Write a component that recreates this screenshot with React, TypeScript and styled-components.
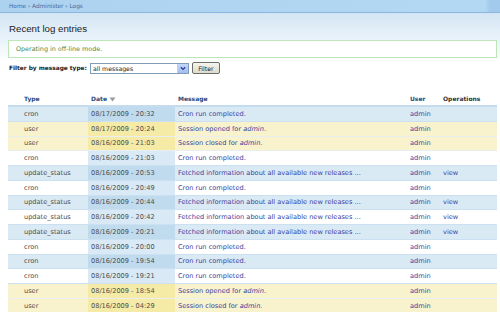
import React from 'react'
import styled, { createGlobalStyle } from 'styled-components'

const GlobalStyle = createGlobalStyle`
  html, body {
    margin: 0;
    padding: 0;
    background: #fff;
  }
  body {
    font-family: "DejaVu Sans", Verdana, sans-serif;
    color: #494949;
  }
`

const Page = styled.div`
  width: 500px;
  height: 312px;
  overflow: hidden;
  background: linear-gradient(#d4e5f3 13px, #eaf3fb 40px, #ffffff 62px);
`

const Breadcrumb = styled.div`
  height: 12px;
  line-height: 12px;
  padding-left: 9px;
  font-size: 5.8px;
  color: #46679a;
  background: linear-gradient(90deg, #acd2f0 0%, #b3d8f3 97%, #a2caec 98%);
  border-bottom: 1px solid #88b7e2;
`

const Content = styled.div`
  padding: 10px 3px 0 8px;
`

const Title = styled.h2`
  margin: 0 0 5px 1px;
  font-family: "Liberation Sans", Arial, sans-serif;
  font-weight: normal;
  font-size: 9.7px;
  line-height: 12px;
  color: #1d1d1d;
`

const Status = styled.div`
  height: 16px;
  line-height: 16px;
  padding-left: 7px;
  background: #fff;
  border: 1px solid #bce6b6;
  font-size: 6.4px;
  color: #4b8c4b;
`

const FilterForm = styled.form`
  display: flex;
  align-items: center;
  gap: 3px;
  margin: 4px 0 0 1px;
  height: 12px;
`

const Label = styled.label`
  font-weight: bold;
  font-size: 5.85px;
  color: #222;
`

const SelectBox = styled.div`
  display: flex;
  align-items: center;
  justify-content: space-between;
  width: 95px;
  height: 9px;
  border: 1px solid #7f9db9;
  background: #fff;
  padding-left: 2px;
  font-size: 6.2px;
  color: #222;
`

const SelectButton = styled.span`
  display: flex;
  align-items: center;
  justify-content: center;
  width: 10px;
  height: 9px;
  background: linear-gradient(#c4d8fb, #a3bdf3);
  border-left: 1px solid #b9cdf6;
`

const Button = styled.button`
  height: 12px;
  width: 28px;
  padding: 0;
  border: 1px solid #6e6e6e;
  border-radius: 2px;
  background: linear-gradient(#f6f5ef, #dedbcb);
  font-family: "DejaVu Sans", Verdana, sans-serif;
  font-size: 6.2px;
  color: #222;
`

const Table = styled.table`
  width: 100%;
  margin-top: 18px;
  border-collapse: collapse;
  table-layout: fixed;
`

const Th = styled.th<{ $plain?: boolean }>`
  height: 13px;
  padding: 0 3px;
  text-align: left;
  font-size: 6px;
  font-weight: bold;
  color: ${p => (p.$plain ? '#333' : '#27497c')};
  border-bottom: 2px solid #c4dcee;
  white-space: nowrap;
`

type Kind = 'odd' | 'even' | 'user'

const Row = styled.tr<{ $kind: Kind }>`
  background: ${p => (p.$kind === 'user' ? '#f9f3cd' : p.$kind === 'odd' ? '#daeaf5' : '#ffffff')};
  border-bottom: 1px solid ${p => (p.$kind === 'user' ? '#e9eef0' : '#cbe1f1')};
`

const Td = styled.td<{ $active?: boolean; $kind?: Kind; $link?: boolean }>`
  height: 13.75px;
  padding: 0 3px;
  font-size: 6.6px;
  white-space: nowrap;
  overflow: hidden;
  color: ${p => (p.$link ? '#3a3f9e' : '#4d4d4d')};
  background: ${p =>
    !p.$active ? 'transparent' : p.$kind === 'user' ? '#f5eaa6' : p.$kind === 'odd' ? '#c1dbee' : '#d9e9f5'};
`

const SortArrow = () => (
  <svg width="7" height="5" viewBox="0 0 7 5" style={{ marginLeft: 2, verticalAlign: 'middle' }}>
    <path d="M0.5 0.5 H6.5 L3.5 4.5 Z" fill="#9a9a9a" />
  </svg>
)

const Chevron = () => (
  <svg width="6" height="5" viewBox="0 0 6 5">
    <path d="M0.8 1.2 L3 3.4 L5.2 1.2" stroke="#2a3f8a" strokeWidth="1.3" fill="none" />
  </svg>
)

type Entry = {
  type: string
  date: string
  message: React.ReactNode
  view?: boolean
}

const fetched = 'Fetched information about all available new releases ...'
const opened = <>Session opened for <em>admin</em>.</>
const closed = <>Session closed for <em>admin</em>.</>

const entries: Entry[] = [
  { type: 'cron', date: '08/17/2009 - 20:32', message: 'Cron run completed.' },
  { type: 'user', date: '08/17/2009 - 20:24', message: opened },
  { type: 'user', date: '08/16/2009 - 21:03', message: closed },
  { type: 'cron', date: '08/16/2009 - 21:03', message: 'Cron run completed.' },
  { type: 'update_status', date: '08/16/2009 - 20:53', message: fetched, view: true },
  { type: 'cron', date: '08/16/2009 - 20:49', message: 'Cron run completed.' },
  { type: 'update_status', date: '08/16/2009 - 20:44', message: fetched, view: true },
  { type: 'update_status', date: '08/16/2009 - 20:42', message: fetched, view: true },
  { type: 'update_status', date: '08/16/2009 - 20:21', message: fetched, view: true },
  { type: 'cron', date: '08/16/2009 - 20:00', message: 'Cron run completed.' },
  { type: 'cron', date: '08/16/2009 - 19:54', message: 'Cron run completed.' },
  { type: 'cron', date: '08/16/2009 - 19:21', message: 'Cron run completed.' },
  { type: 'user', date: '08/16/2009 - 18:54', message: opened },
  { type: 'user', date: '08/16/2009 - 04:29', message: closed },
]

export default function App() {
  return (
    <Page>
      <GlobalStyle />
      <Breadcrumb>Home › Administer › Logs</Breadcrumb>
      <Content>
        <Title>Recent log entries</Title>
        <Status>Operating in off-line mode.</Status>
        <FilterForm onSubmit={e => e.preventDefault()}>
          <Label>Filter by message type:</Label>
          <SelectBox>
            <span>all messages</span>
            <SelectButton>
              <Chevron />
            </SelectButton>
          </SelectBox>
          <Button type="submit">Filter</Button>
        </FilterForm>
        <Table>
          <colgroup>
            <col style={{ width: 13 }} />
            <col style={{ width: 67 }} />
            <col style={{ width: 87 }} />
            <col style={{ width: 232 }} />
            <col style={{ width: 33 }} />
            <col />
          </colgroup>
          <thead>
            <tr>
              <Th />
              <Th>Type</Th>
              <Th>
                Date
                <SortArrow />
              </Th>
              <Th>Message</Th>
              <Th>User</Th>
              <Th $plain>Operations</Th>
            </tr>
          </thead>
          <tbody>
            {entries.map((entry, idx) => {
              const kind: Kind = entry.type === 'user' ? 'user' : idx % 2 === 0 ? 'odd' : 'even'
              return (
                <Row key={idx} $kind={kind}>
                  <Td />
                  <Td>{entry.type}</Td>
                  <Td $active $kind={kind}>
                    {entry.date}
                  </Td>
                  <Td $link>{entry.message}</Td>
                  <Td $link>admin</Td>
                  <Td $link>{entry.view ? 'view' : ''}</Td>
                </Row>
              )
            })}
          </tbody>
        </Table>
      </Content>
    </Page>
  )
}
